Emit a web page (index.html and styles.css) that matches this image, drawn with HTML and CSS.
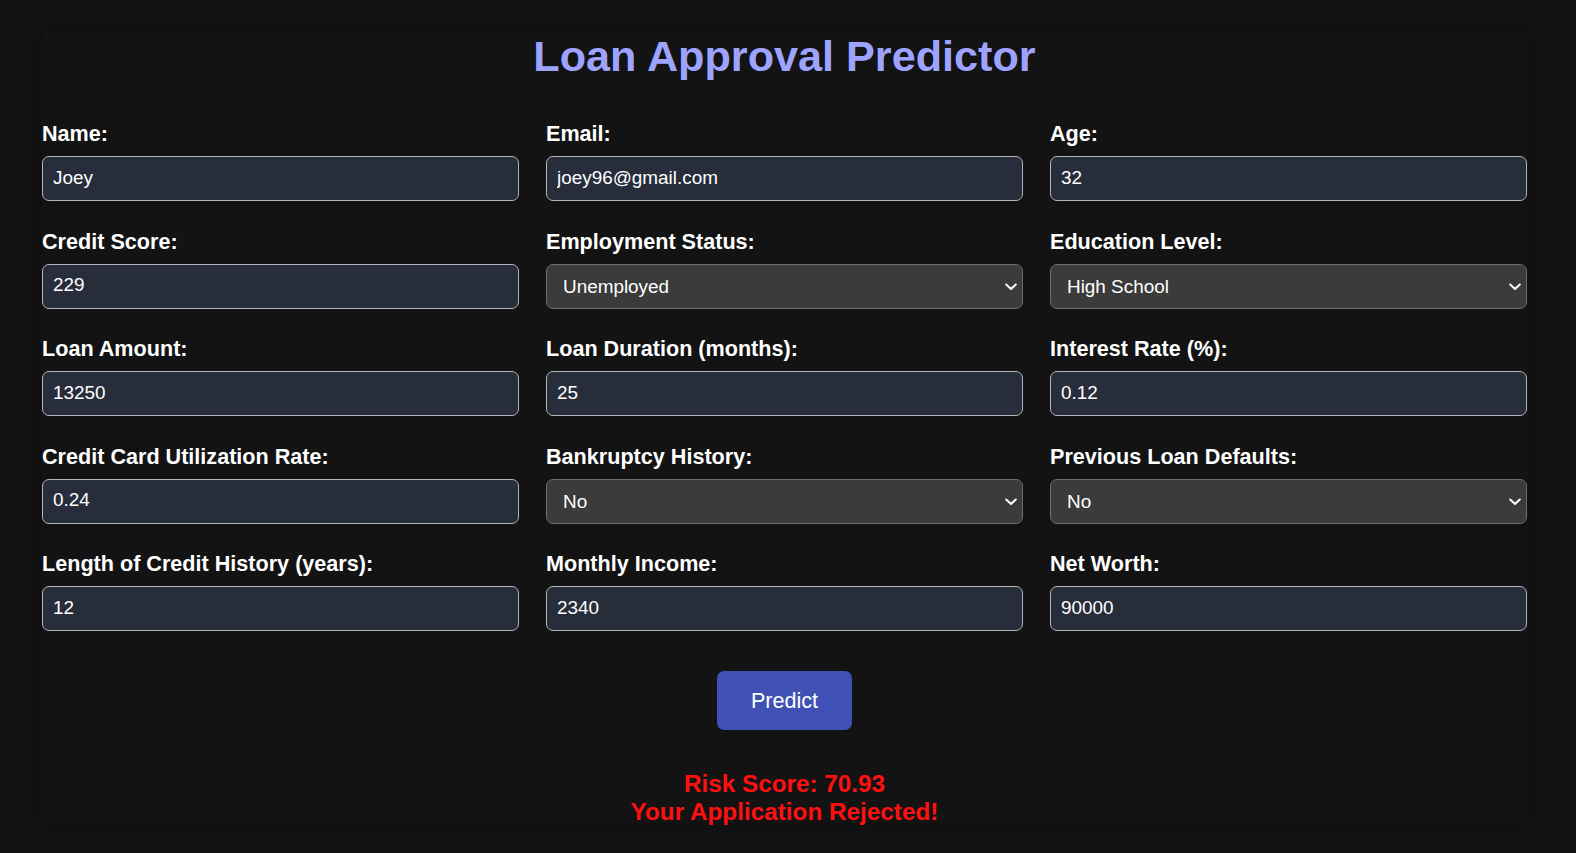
FILE: index.html
```html
<!DOCTYPE html>
<html lang="en">
<head>
<meta charset="utf-8">
<title>Loan Approval Predictor</title>
<link rel="stylesheet" href="styles.css">
</head>
<body>
<div class="panel">
  <h1 class="title">Loan Approval Predictor</h1>
  <form class="grid">
    <div class="field">
      <label class="label">Name:</label>
      <input class="input" type="text" value="Joey">
    </div>
    <div class="field">
      <label class="label">Email:</label>
      <input class="input" type="text" value="joey96@gmail.com">
    </div>
    <div class="field">
      <label class="label">Age:</label>
      <input class="input" type="text" value="32">
    </div>

    <div class="field">
      <label class="label">Credit Score:</label>
      <input class="input" type="text" value="229">
    </div>
    <div class="field">
      <label class="label">Employment Status:</label>
      <div class="select-wrap">
        <select class="select"><option>Unemployed</option></select>
        <svg class="chevron" width="12" height="8" viewBox="0 0 12 8"><path d="M1.2 1.5 L6 6 L10.8 1.5" fill="none" stroke="#fff" stroke-width="2" stroke-linecap="round" stroke-linejoin="round"/></svg>
      </div>
    </div>
    <div class="field">
      <label class="label">Education Level:</label>
      <div class="select-wrap">
        <select class="select"><option>High School</option></select>
        <svg class="chevron" width="12" height="8" viewBox="0 0 12 8"><path d="M1.2 1.5 L6 6 L10.8 1.5" fill="none" stroke="#fff" stroke-width="2" stroke-linecap="round" stroke-linejoin="round"/></svg>
      </div>
    </div>

    <div class="field">
      <label class="label">Loan Amount:</label>
      <input class="input" type="text" value="13250">
    </div>
    <div class="field">
      <label class="label">Loan Duration (months):</label>
      <input class="input" type="text" value="25">
    </div>
    <div class="field">
      <label class="label">Interest Rate (%):</label>
      <input class="input" type="text" value="0.12">
    </div>

    <div class="field">
      <label class="label">Credit Card Utilization Rate:</label>
      <input class="input" type="text" value="0.24">
    </div>
    <div class="field">
      <label class="label">Bankruptcy History:</label>
      <div class="select-wrap">
        <select class="select"><option>No</option></select>
        <svg class="chevron" width="12" height="8" viewBox="0 0 12 8"><path d="M1.2 1.5 L6 6 L10.8 1.5" fill="none" stroke="#fff" stroke-width="2" stroke-linecap="round" stroke-linejoin="round"/></svg>
      </div>
    </div>
    <div class="field">
      <label class="label">Previous Loan Defaults:</label>
      <div class="select-wrap">
        <select class="select"><option>No</option></select>
        <svg class="chevron" width="12" height="8" viewBox="0 0 12 8"><path d="M1.2 1.5 L6 6 L10.8 1.5" fill="none" stroke="#fff" stroke-width="2" stroke-linecap="round" stroke-linejoin="round"/></svg>
      </div>
    </div>

    <div class="field">
      <label class="label">Length of Credit History (years):</label>
      <input class="input" type="text" value="12">
    </div>
    <div class="field">
      <label class="label">Monthly Income:</label>
      <input class="input" type="text" value="2340">
    </div>
    <div class="field">
      <label class="label">Net Worth:</label>
      <input class="input" type="text" value="90000">
    </div>
  </form>
  <div class="actions">
    <button class="button" type="button">Predict</button>
  </div>
  <div class="result">
    <div>Risk Score: 70.93</div>
    <div>Your Application Rejected!</div>
  </div>
</div>
</body>
</html>
```

FILE: styles.css
```css
html, body {
  margin: 0;
  padding: 0;
  background: #121212;
}

body {
  font-family: "Liberation Sans", Arial, sans-serif;
  color: #ffffff;
  height: 853px;
  overflow: hidden;
}

.panel {
  margin: 31px 0 0 41px;
  width: 1487px;
  padding: 0 1px;
  box-sizing: border-box;
  background: #131313;
  border-radius: 10px;
  box-shadow: 0 0 8px rgba(0, 0, 0, 0.25);
  height: 792px;
}

.title {
  margin: 0 0 40px 0;
  font-size: 43.2px;
  line-height: 50px;
  font-weight: bold;
  color: #9ea3ff;
  text-align: center;
}

.grid {
  display: grid;
  grid-template-columns: repeat(3, 1fr);
  column-gap: 27px;
  row-gap: 27.5px;
  margin: 0;
}

.field {
  display: flex;
  flex-direction: column;
}

.label {
  font-size: 21.6px;
  font-weight: bold;
  line-height: 25px;
  margin-bottom: 10px;
  color: #ffffff;
}

.input {
  box-sizing: border-box;
  height: 45px;
  width: 100%;
  margin: 0;
  padding: 0 10px 2px 10px;
  border: 1px solid #b4b4b4;
  border-radius: 7px;
  background: #272d3b;
  color: #ffffff;
  font-family: "Liberation Sans", Arial, sans-serif;
  font-size: 18.9px;
  outline: none;
}

.select-wrap {
  position: relative;
}

.select {
  -webkit-appearance: none;
  appearance: none;
  box-sizing: border-box;
  height: 45px;
  width: 100%;
  margin: 0;
  padding: 0 30px 0 16px;
  border: 1px solid #6e6e6e;
  border-radius: 7px;
  background: #3b3b3b;
  color: #ffffff;
  font-family: "Liberation Sans", Arial, sans-serif;
  font-size: 18.9px;
  outline: none;
}

.chevron {
  position: absolute;
  right: 6px;
  top: 19px;
}

.actions {
  display: flex;
  justify-content: center;
  margin-top: 40px;
}

.button {
  box-sizing: border-box;
  height: 59px;
  padding: 0 34px;
  border: none;
  border-radius: 7px;
  background: #3f51b5;
  color: #ffffff;
  font-family: "Liberation Sans", Arial, sans-serif;
  font-size: 21.6px;
}

.result {
  margin-top: 40px;
  text-align: center;
  color: #ff1010;
  font-size: 24.3px;
  font-weight: bold;
  line-height: 28px;
}
```
